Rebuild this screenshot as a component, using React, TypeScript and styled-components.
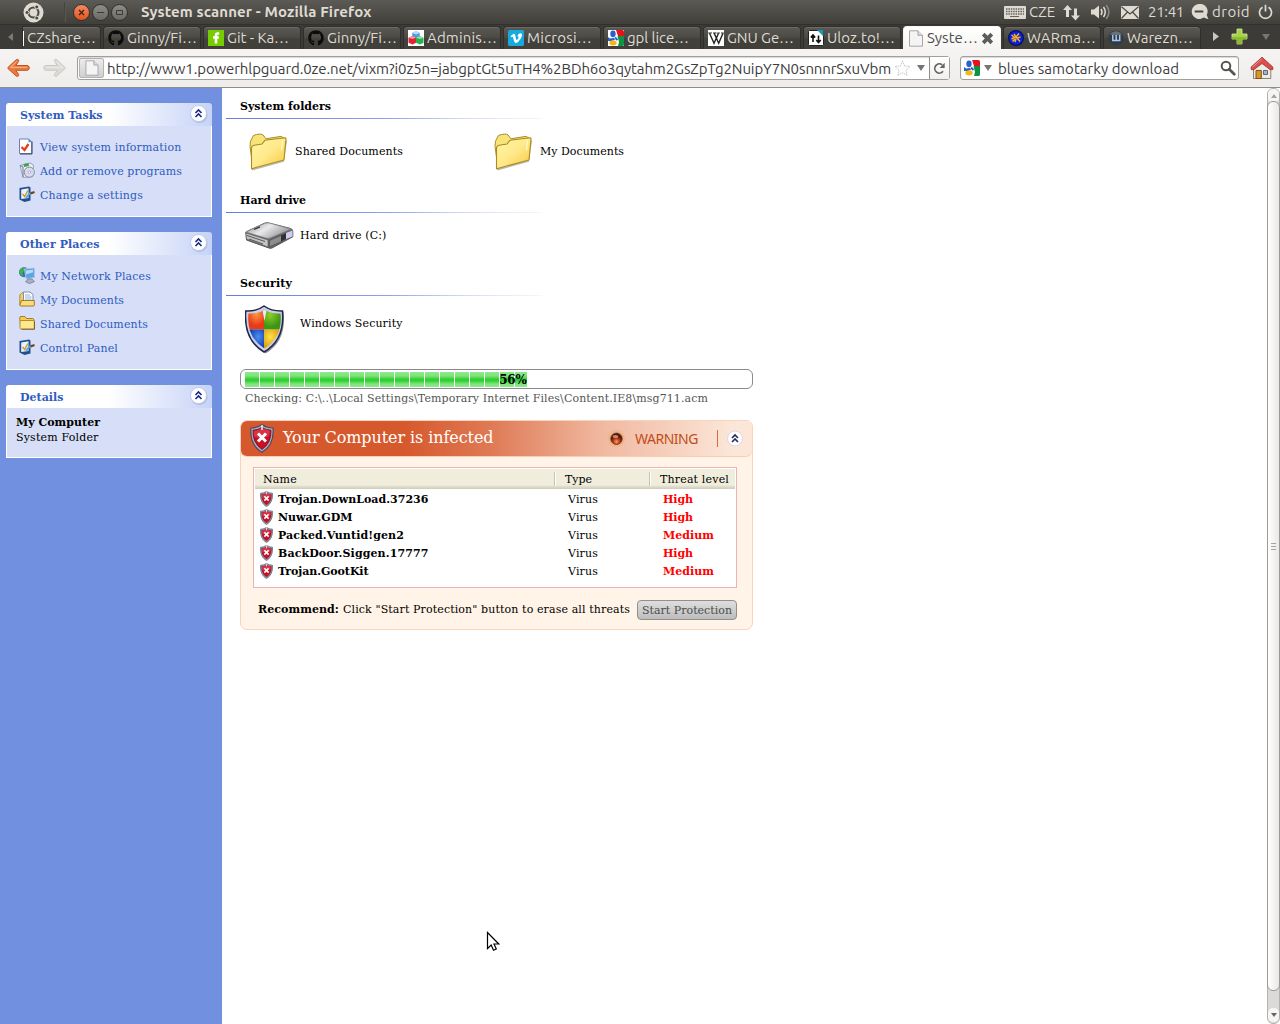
import React, { useLayoutEffect, useRef, useState } from "react";
import styled, { createGlobalStyle, css } from "styled-components";
import { FaGithub } from "react-icons/fa";

const Global = createGlobalStyle`
  *, *::before, *::after { box-sizing: border-box; }
  html, body { margin: 0; padding: 0; overflow: hidden; background: #fff; }
  svg { display: block; flex: none; }
`;

const serif = `"DejaVu Serif", serif`;
const chrome = `Ubuntu, "Noto Sans", "Open Sans", sans-serif`;

/* ---------- text that is tracked to fill a known measure ---------- */

const Measure = styled.span<{ $w: number }>`
  display: block;
  flex: none;
  width: ${(p) => p.$w}px;
  white-space: pre;
`;

const Run = styled.span`
  display: inline-block;
  white-space: pre;
`;

function Fit({ w, children }: { w: number; children: string }) {
  const ref = useRef<HTMLSpanElement>(null);
  const [tracking, setTracking] = useState(0);
  useLayoutEffect(() => {
    const el = ref.current;
    if (!el) return;
    const natural = el.getBoundingClientRect().width - tracking * children.length;
    setTracking((w - natural) / children.length);
  }, [w, children]);
  return (
    <Measure $w={w}>
      <Run ref={ref} style={{ letterSpacing: tracking }}>
        {children}
      </Run>
    </Measure>
  );
}

/* ---------- window chrome ---------- */

const Screen = styled.div`
  display: flex;
  flex-direction: column;
  width: 1280px;
  height: 1024px;
  overflow: hidden;
  font: 11px/15px ${serif};
  color: #000;
`;

const TitleBar = styled.header`
  display: flex;
  align-items: center;
  height: 24px;
  flex: none;
  padding: 0 7px 0 23px;
  background: linear-gradient(#5b5a55, #403f3a);
  color: #dfdbd2;
  font: 15px/24px ${chrome};
`;

const BarDivider = styled.i`
  width: 2px;
  height: 20px;
  margin: 0 7px 0 20px;
  background: linear-gradient(90deg, #3c3b37, #62615c);
`;

const WindowButton = styled.span<{ $close?: boolean }>`
  display: grid;
  place-items: center;
  width: 17px;
  height: 17px;
  margin-right: 2px;
  border: 1px solid #33322e;
  border-radius: 50%;
  background: ${(p) => (p.$close ? "linear-gradient(#f58a62, #e2541d)" : "linear-gradient(#8f8d86, #6b6a64)")};
`;

const WindowTitle = styled.div`
  margin-left: 11px;
  font-weight: 700;
`;

const Indicators = styled.div`
  display: flex;
  align-items: center;
  margin-left: auto;
`;

const Indicator = styled.div<{ $after: number }>`
  display: flex;
  align-items: center;
  gap: 3px;
  margin-right: ${(p) => p.$after}px;
`;

const TabStrip = styled.nav`
  display: flex;
  align-items: flex-end;
  height: 25px;
  flex: none;
  gap: 2px;
  background: linear-gradient(#32312d 0 1px, #3c3b37 1px);
`;

const StripArrow = styled.div`
  display: grid;
  place-items: center;
  width: 20px;
  height: 25px;
`;

const TabBox = styled.div<{ $active?: boolean; $cut?: boolean }>`
  display: flex;
  align-items: center;
  gap: 3px;
  width: ${(p) => (p.$cut ? 79 : 98)}px;
  height: 23px;
  padding-left: ${(p) => (p.$cut ? 0 : 4)}px;
  border: 1px solid #2f2e2a;
  border-bottom: 0;
  border-radius: ${(p) => (p.$cut ? "0 4px 0 0" : "4px 4px 0 0")};
  background: linear-gradient(#5a5954, #4a4944 50%, #42413c 50%, #403f3a);
  box-shadow: inset 0 1px #6c6b65;
  color: #dfdbd2;
  font: 15px/22px ${chrome};
  ${(p) =>
    p.$active &&
    css`
      background: linear-gradient(#fff, #f5f4f2);
      border-color: #f6f5f3;
      box-shadow: none;
      color: #4c4c4c;
    `}
`;

const CutMark = styled.i`
  width: 1px;
  height: 15px;
  background: #fff;
`;

const StripTools = styled.div`
  display: flex;
  align-items: center;
  height: 25px;
  padding-left: 10px;
`;

const Toolbar = styled.div`
  display: flex;
  align-items: center;
  flex: none;
  height: 39px;
  padding: 0 6px 0 7px;
  border-bottom: 1px solid #8e8d8a;
  background: linear-gradient(#f5f4f2, #eeedeb);
  color: #3c3c3c;
  font: 15px/22px ${chrome};
`;

const Field = styled.div<{ $w: number }>`
  display: flex;
  align-items: center;
  width: ${(p) => p.$w}px;
  height: 24px;
  border: 1px solid #a09f9b;
  border-radius: 3px;
  background: #fff;
  box-shadow: inset 0 1px 1px #d8d7d5;
  & > span { padding-top: 1px; }
`;

const Identity = styled.div`
  display: grid;
  place-items: center;
  width: 25px;
  height: 20px;
  margin: 0 3px 0 1px;
  border: 1px solid #b5b4b1;
  border-radius: 2px;
  background: linear-gradient(#ededed, #cfcfcf);
`;

const Reload = styled.div`
  display: grid;
  place-items: center;
  width: 20px;
  height: 22px;
  margin-left: 4px;
  border-left: 1px solid #8e8d8a;
  background: linear-gradient(#fff, #f1f0ee);
`;

const Push = styled.i<{ $w: number }>`
  flex: none;
  width: ${(p) => p.$w}px;
`;

/* ---------- page ---------- */

const Viewport = styled.div`
  display: flex;
  flex: 1;
  min-height: 0;
`;

const Sidebar = styled.aside`
  display: flex;
  flex-direction: column;
  gap: 15px;
  width: 222px;
  flex: none;
  padding: 15px 10px 0 6px;
  background: #7190e0;
`;

const Panel = styled.section`
  color: #2f5bc0;
`;

const PanelHead = styled.div`
  display: flex;
  align-items: flex-start;
  justify-content: space-between;
  height: 23px;
  padding: 1px 3px 0 14px;
  border-radius: 3px 3px 0 0;
  background: linear-gradient(90deg, #fff 50%, #c6d3f7);
  font-weight: 700;
  line-height: 23px;
`;

const PanelBody = styled.div<{ $details?: boolean }>`
  border: 1px solid #fff;
  border-top: 0;
  padding: ${(p) => (p.$details ? "7px 9px 12px" : "9px 12px")};
  background: #d6dff7;
  color: ${(p) => (p.$details ? "#000" : "inherit")};
`;

const PanelLink = styled.div`
  display: flex;
  align-items: center;
  gap: 5px;
  height: 24px;
  & > svg { margin-bottom: 2px; }
`;

const Bold = styled.div`
  font-weight: 700;
`;

const Main = styled.main`
  flex: 1;
  min-width: 0;
  padding: 10px 0 0 18px;
`;

const SectionTitle = styled.h2`
  height: 21px;
  margin: 0 0 0 -14px;
  padding: 1px 0 0 14px;
  width: 334px;
  font: 700 11px/15px ${serif};
  background: linear-gradient(90deg, #5f7fdd, #8ba2e8 50%, #d3dbf6 75%, #f6f4f6 97%, #fff) left bottom / 320px 1px no-repeat;
`;

const Places = styled.div<{ $h: number; $pad: number }>`
  display: flex;
  align-items: flex-start;
  height: ${(p) => p.$h}px;
  padding: ${(p) => p.$pad}px 0 0 5px;
`;

const Place = styled.div<{ $gap: number; $indent?: number; $label: number }>`
  display: flex;
  gap: ${(p) => p.$gap}px;
  width: 245px;
  padding-left: ${(p) => p.$indent ?? 0}px;
  & > span { margin-top: ${(p) => p.$label}px; }
`;

const Progress = styled.div`
  width: 513px;
  height: 20px;
  padding: 2px 4px;
  border: 1px solid #8b8b8b;
  border-radius: 6px;
  background: #fff;
`;

const ProgressFill = styled.div`
  display: flex;
  justify-content: flex-end;
  height: 15px;
  background:
    repeating-linear-gradient(90deg, transparent 0 14px, #fff 14px 15px),
    linear-gradient(#8fe88f 0, #7fe37f 25%, #2ccf2c 50%, #35d335 60%, #7fe37f 80%, #90e890);
  font: 700 12px/16px ${serif};
`;

const Checking = styled.div`
  padding: 2px 0 0 5px;
  color: #555;
`;

const Alert = styled.section`
  width: 513px;
  height: 210px;
  margin-top: 14px;
  border: 1px solid #fbd3bd;
  border-radius: 7px;
  background: #fff4e7;
`;

const AlertHead = styled.div`
  display: flex;
  align-items: center;
  height: 36px;
  padding-left: 9px;
  border-bottom: 1px solid #f8cdb5;
  border-radius: 6px;
  background: linear-gradient(90deg, #d6592d 0 32%, #df7a55 49%, #f0b79f 70%, #fbe6d8 96%);
`;

const AlertTitle = styled.div`
  margin: -2px 0 0 9px;
  color: #fff;
  font: 16px/34px ${serif};
`;

const Warning = styled.div`
  margin: 1px 0 0 9px;
  color: #c24d18;
  font: 14px/32px "Noto Sans", sans-serif;
`;

const HeadRule = styled.i`
  width: 1px;
  height: 17px;
  margin: 0 8px 0 19px;
  background: #dc6a3d;
`;

const Table = styled.div`
  width: 484px;
  height: 121px;
  margin: 10px 0 0 12px;
  padding: 1px;
  border: 1px solid #efb2b2;
  background: #fff;
`;

const HeadRow = styled.div`
  display: grid;
  grid-template-columns: 299px 95px 1fr;
  align-items: center;
  height: 20px;
  margin-bottom: 1px;
  background: linear-gradient(#f0eddd 0 16px, #dcd9c8 18px, #cfccb9);
`;

const HeadCell = styled.div<{ $ruled?: boolean }>`
  height: 14px;
  padding-left: 8px;
  line-height: 15px;
  ${(p) =>
    p.$ruled &&
    css`
      border-left: 1px solid #c5c2b2;
      box-shadow: inset 1px 0 #fff;
      padding-left: 10px;
    `}
`;

const Row = styled.div`
  display: grid;
  grid-template-columns: 18px 290px 95px 1fr;
  align-items: center;
  height: 18px;
  padding-left: 5px;
`;

const Threat = styled.div`
  font-weight: 700;
`;

const Level = styled(Threat)`
  color: #f00;
`;

const Recommend = styled.div`
  display: flex;
  align-items: flex-start;
  padding: 12px 0 0 17px;
  line-height: 19px;
`;

const StartButton = styled.button`
  width: 100px;
  height: 20px;
  margin-left: 7px;
  padding: 0 4px;
  border: 1px solid #8f8f8f;
  border-radius: 4px;
  background: linear-gradient(#dedede, #bdbdbd);
  color: #4c4c4c;
  font: 11px/17px ${serif};
  text-align: left;
`;

const Scrollbar = styled.div`
  display: flex;
  flex-direction: column;
  width: 13px;
  flex: none;
  padding-bottom: 1px;
  border: 1px solid #b4b2ae;
  border-radius: 6px;
  background: #dcdad8;
`;

const ScrollStep = styled.div`
  display: grid;
  place-items: center;
  height: 14px;
  background: #f6f5f4;
  border-radius: 5px;
`;

const ScrollThumb = styled.div`
  display: grid;
  place-items: center;
  height: 890px;
  margin: -2px -1px 0;
  border: 1px solid #9b9a96;
  border-radius: 6px;
  background: linear-gradient(90deg, #fff, #e9e8e6);
`;

const ScrollTrack = styled.div`
  flex: 1;
`;

const Pointer = styled.div`
  position: absolute;
  left: 486px;
  top: 931px;
`;

/* ---------- icons ---------- */

const Chevrons = () => (
  <svg width="20" height="20" viewBox="0 0 20 20">
    <circle cx="10.2" cy="10.8" r="8.400" fill="#8ea0d0" opacity=".4" />
    <circle cx="9.500" cy="9.500" r="8" fill="#fff" stroke="#b5c0e0" strokeWidth=".8" />
    <path d="M6.500 9l3-3 3 3M6.500 13l3-3 3 3" fill="none" stroke="#17298c" strokeWidth="1.600" />
  </svg>
);

const AlertChevrons = () => (
  <svg width="18" height="18" viewBox="0 0 18 18">
    <circle cx="9" cy="8.500" r="7.500" fill="#fff" stroke="#d5cde0" strokeWidth=".8" />
    <path d="M6 8l3-3 3 3M6 12l3-3 3 3" fill="none" stroke="#26285c" strokeWidth="1.600" />
  </svg>
);

const PageIcon = ({ w = 15, h = 17 }: { w?: number; h?: number }) => (
  <svg width={w} height={h} viewBox="0 0 15 17">
    <path d="M1 .8h8.500L14 5.300v10.900H1z" fill="#f4f4f4" stroke="#a5a5a5" />
    <path d="M9.500.8v4.500H14" fill="#ddd" stroke="#a5a5a5" />
  </svg>
);

const UbuntuLogo = () => (
  <svg width="21" height="21" viewBox="0 0 21 21">
    <circle cx="10.500" cy="10.500" r="10" fill="#dfdbd2" />
    <circle cx="10.500" cy="10.500" r="5" fill="none" stroke="#4b4a45" strokeWidth="2.100" />
    <g fill="#4b4a45" stroke="#dfdbd2" strokeWidth="1">
      <circle cx="4" cy="10.500" r="2" />
      <circle cx="13.800" cy="4.900" r="2" />
      <circle cx="13.800" cy="16.100" r="2" />
    </g>
  </svg>
);

const Triangle = ({ dir, fill, w = 8, h = 8 }: { dir: "l" | "r" | "d" | "u"; fill: string; w?: number; h?: number }) => {
  const d = { l: "M8 0v8L0 4z", r: "M0 0v8l8-4z", d: "M0 0h8L4 8z", u: "M0 8h8L4 0z" }[dir];
  return (
    <svg width={w} height={h} viewBox="0 0 8 8" preserveAspectRatio="none">
      <path d={d} fill={fill} />
    </svg>
  );
};

const GitHub = () => <FaGithub size={16} color="#0c0c0c" />;

const Forrst = () => (
  <svg width="16" height="16" viewBox="0 0 16 16">
    <path d="M0 0h16v16H0z" fill="#77cc00" />
    <path d="M11.200 3.500H10Q8 3.300 8 5v8.500M5 7.500H10.800" stroke="#fff" strokeWidth="2.500" fill="none" />
  </svg>
);

const Cubes = () => (
  <svg width="16" height="16" viewBox="0 0 16 16">
    <path d="M0 0h16v16H0z" fill="#fff" />
    <path d="M8 1l3.800 2v4L8 9 4.200 7V3z" fill="#4a9de8" />
    <path d="M8 1l3.800 2L8 4.500 4.200 3z" fill="#b7dcf8" />
    <path d="M4.500 6L8 7.700v5L4.500 14.500 .5 12.800V7.700z" fill="#df2434" />
    <path d="M4.500 6L8 7.700 4.500 9 .5 7.700z" fill="#f49aa0" />
    <path d="M12 6l3.500 1.700v5L12 14.500l-4-1.700V7.700z" fill="#28b24b" />
    <path d="M12 6l3.500 1.700L12 9 8 7.700z" fill="#9be0a8" />
  </svg>
);

const Vimeo = () => (
  <svg width="16" height="16" viewBox="0 0 16 16">
    <rect width="16" height="16" rx="1.500" fill="#17aadc" />
    <path d="M2.500 6.200l2.700-2.300c1.200-.6 1.900.1 2.200 1.800.5 3 .9 4.400 1.300 4.400.5 0 1.900-2.300 1.900-3.200 0-.7-.5-.9-1.200-.6.6-2.200 1.900-3.100 3.200-3 1.100.1 1.500 1 1.300 2.200-.5 2.900-4 7.500-5.900 7.500-1.500 0-1.900-1.600-2.700-4.700-.5-1.900-.8-2-1.900-1z" fill="#fff" />
  </svg>
);

const Google = () => (
  <svg width="16" height="16" viewBox="0 0 16 16">
    <path d="M0 0h16v16H0z" fill="#fff" />
    <path d="M8 0h6.500Q16 0 16 1.500V6h-6z" fill="#e8121c" />
    <path d="M9.500 6H16v8.500q0 1.500-1.500 1.500H10l1-4z" fill="#0d9440" />
    <path d="M0 7l2 1.500 4-.5 1 2-4 1H0z" fill="#2b60c8" />
    <ellipse cx="5" cy="3.800" rx="2.700" ry="3.400" fill="#2b60c8" />
    <path d="M7 7.500L9.500 10" stroke="#2b60c8" strokeWidth="2" />
    <ellipse cx="5" cy="13" rx="3.700" ry="2.400" fill="#f5b912" />
  </svg>
);

const Wikipedia = () => (
  <svg width="16" height="16" viewBox="0 0 16 16">
    <path d="M0 0h16v16H0z" fill="#fff" />
    <path d="M1.500 3.300L6 13.300 10.500 3.300M6.200 3.300l4.500 10L15 3.300" stroke="#222" strokeWidth="1.400" fill="none" />
    <path d="M.3 3h3.600M5 3h3.600M9.300 3h2.500M13 3h2.700" stroke="#222" />
  </svg>
);

const Uloz = () => (
  <svg width="16" height="16" viewBox="0 0 16 16">
    <path d="M.5 1.500q0-1 1-1h9l5 5v9q0 1-1 1h-13q-1 0-1-1z" fill="#fff" stroke="#222" />
    <path d="M9 0h6v6z" fill="#1698b8" />
    <path d="M5 12V5.500M2.800 7.500L5 5l2.200 2.500M10.500 5.500V12M8.300 10l2.200 2.500 2.200-2.500" stroke="#111" strokeWidth="1.600" fill="none" />
  </svg>
);

const WarMania = () => (
  <svg width="16" height="16" viewBox="0 0 16 16">
    <circle cx="8" cy="8" r="7.400" fill="#0c22d8" stroke="#061062" strokeWidth="1.200" />
    <path d="M3.500 5l3 2.500-3 1.500M6 4l2 3 3-3.500M12.500 7l-3.500 1 3 3.500M8 8.500l-1 3.500M4.500 11.500L7 9" stroke="#f5ac26" strokeWidth="1.500" fill="none" />
  </svg>
);

const Warezn = () => (
  <svg width="16" height="16" viewBox="0 0 16 16">
    <circle cx="8" cy="8" r="7.500" fill="#303b48" />
    <path d="M2 4.500a7.300 7.300 0 0 1 12 0q-6 1.500-12 0z" fill="#68727e" />
    <path d="M4.800 5v5.500h6.900V5M8.200 5v5" stroke="#a9c9ea" strokeWidth="1.500" fill="none" />
  </svg>
);

const CloseTab = () => (
  <svg width="13" height="13" viewBox="0 0 13 13">
    <path d="M2.200 2.200l8.600 8.600M10.800 2.200l-8.600 8.600" stroke="#5d5d5b" strokeWidth="3.800" />
  </svg>
);

const Plus = () => (
  <svg width="17" height="17" viewBox="0 0 17 17">
    <path d="M6 1h5v5h5v5h-5v5H6v-5H1V6h5z" fill="#a6d243" stroke="#d5ecaa" strokeWidth=".8" />
    <path d="M6 9h10v2h-5v5H6v-5H1V9z" fill="#8abb28" />
  </svg>
);

const Arrow = ({ back }: { back?: boolean }) => (
  <svg width="24" height="20" viewBox="0 0 24 20" transform={back ? undefined : "scale(-1 1)"}>
    <path
      d="M9.500 1.500c1.500-.6 2.800.8 2 2L8.700 7.500H20c3 0 3 4.800 0 4.800H8.700l2.800 4c.8 1.300-.6 2.600-2 2L1.200 10.800q-.8-.8 0-1.600z"
      fill={back ? "#ea7a3d" : "#dcdad7"}
      stroke={back ? "#c4521b" : "#cbc9c5"}
    />
    <path d="M9.500 3.500L3.500 9.300H20" fill="none" stroke={back ? "#f9b88e" : "#ebeae8"} />
  </svg>
);

const Star = () => (
  <svg width="17" height="17" viewBox="0 0 17 17">
    <path d="M8.500 1l2.200 5 5.300.5-4 3.700 1.200 5.300-4.700-2.800-4.700 2.800L5 10.200 1 6.500 6.300 6z" fill="#fdfdfd" stroke="#c8c8c8" strokeDasharray="1.500 .7" />
  </svg>
);

const ReloadIcon = () => (
  <svg width="13" height="13" viewBox="0 0 13 13">
    <path d="M10 9.300A4.600 4.600 0 1 1 9.200 2.800" fill="none" stroke="#666560" strokeWidth="1.700" />
    <path d="M6.500 6h5.200V.8z" fill="#666560" />
  </svg>
);

const Magnifier = () => (
  <svg width="16" height="16" viewBox="0 0 16 16">
    <circle cx="6" cy="6" r="4.300" fill="#fff" stroke="#55544f" strokeWidth="2" />
    <path d="M9.300 9.300l5 5" stroke="#55544f" strokeWidth="2.700" strokeLinecap="round" />
  </svg>
);

const Home = () => (
  <svg width="24" height="24" viewBox="0 0 24 24">
    <path d="M3.500 10.500L12 3l8.800 7.500V22.500H3.500z" fill="#ecebe4" stroke="#888575" />
    <path d="M12 1.200l10.800 9.800v2.600h-2.700L12 7.500l-8.100 6.100H1.200V11z" fill="#d84f4f" stroke="#a42626" strokeWidth=".8" />
    <path d="M12 2.500L2.500 11.200" stroke="#ef9090" />
    <path d="M6 14.500h5.300v8H6z" fill="#d9952f" stroke="#845410" />
    <path d="M13.500 14.500h4v4h-4z" fill="#9bb7d8" stroke="#666" />
  </svg>
);

const Keyboard = () => (
  <svg width="22" height="13" viewBox="0 0 22 13">
    <rect width="22" height="13" rx="1" fill="#dfdbd2" />
    <path d="M2 3h18M2 5.500h18M2 8h18" stroke="#65645f" strokeWidth="1.300" strokeDasharray="1.500 .9" />
    <path d="M6 10.500h9" stroke="#65645f" />
  </svg>
);

const NetArrows = () => (
  <svg width="17" height="17" viewBox="0 0 17 17">
    <path d="M4.500 1L9 6H6v7H3V6H0zM12.500 16.500L8 11.500h3V4.500h3v7h3z" fill="#dfdbd2" />
  </svg>
);

const Sound = () => (
  <svg width="20" height="16" viewBox="0 0 20 16">
    <path d="M0 5.500h3L8 1.500v13l-5-4H0z" fill="#dfdbd2" />
    <path d="M10 5q2 3 0 6M12.500 3q3.500 5 0 10" fill="none" stroke="#dfdbd2" strokeWidth="1.500" />
    <path d="M15.300 1q5.200 7 0 14" fill="none" stroke="#8d8a83" strokeWidth="1.500" />
  </svg>
);

const Mail = () => (
  <svg width="18" height="13" viewBox="0 0 18 13">
    <path d="M0 0h18v13H0z" fill="#dfdbd2" />
    <path d="M.5.8L9 8 17.500.8M.5 12.500L6.500 6M17.500 12.500L11.500 6" fill="none" stroke="#4b4a45" strokeWidth="1.200" />
  </svg>
);

const MeBubble = () => (
  <svg width="18" height="16" viewBox="0 0 18 16">
    <path d="M8 0a7.500 7.500 0 1 0 4.600 13.600l4.900 1.600-1.800-4.200A7.500 7.500 0 0 0 8 0z" fill="#dfdbd2" />
    <path d="M3.700 7.500h8.600" stroke="#45443f" strokeWidth="2" />
  </svg>
);

const Power = () => (
  <svg width="15" height="16" viewBox="0 0 15 16">
    <path d="M4.500 3.200a6 6 0 1 0 6 0M7.500.8v6.700" fill="none" stroke="#dfdbd2" strokeWidth="1.700" />
  </svg>
);

const ReportIcon = () => (
  <svg width="16" height="17" viewBox="0 0 16 17">
    <path d="M.5 1h9.200l3 3v11.500H.5z" fill="#fff" stroke="#7380a8" />
    <path d="M13 3.500v12.500H1" stroke="#3d4868" fill="none" />
    <path d="M9.500 .8l3.500 3.500H9.500z" fill="#4c8fd8" />
    <path d="M2.500 9l3 3L9.500 6" fill="none" stroke="#ea3c1c" strokeWidth="2.300" />
  </svg>
);

const ProgramsIcon = () => (
  <svg width="16" height="17" viewBox="0 0 16 17">
    <path d="M1 3.500l10-2.500 3.500 2-1 11.500-9.500 1z" fill="#e9eef4" stroke="#8792a5" strokeWidth=".8" />
    <path d="M1 3.500l3 1.500v10" fill="none" stroke="#6b7890" />
    <path d="M4.500 2l5-1 .5 3-5 1z" fill="#45a04d" />
    <circle cx="10.300" cy="10.200" r="5.100" fill="#dcd9f0" stroke="#8388a8" />
    <path d="M10.300 10.200l4-3a5 5 0 0 1 .8 3z" fill="#b5e0d2" />
    <circle cx="10.300" cy="10.200" r="1.300" fill="#fff" stroke="#8388a8" strokeWidth=".6" />
  </svg>
);

const SettingsIcon = () => (
  <svg width="16" height="17" viewBox="0 0 16 17">
    <path d="M.5 2l9.500-1.500 1.500 1v13L5.500 16 .5 13.500z" fill="#234f8e" />
    <path d="M2.200 3.500l7.300-1.200v9.700l-7.300 1z" fill="#e8f3ff" />
    <path d="M3.500 8l2.200 2.500L8.800 4.500" fill="none" stroke="#d29b22" strokeWidth="1.400" />
    <path d="M7 12l3-4 3-1.500" fill="none" stroke="#58a7e0" strokeWidth="2" />
    <path d="M11.500 7.500l4-1.500" stroke="#6b4028" strokeWidth="2.200" />
  </svg>
);

const NetworkIcon = () => (
  <svg width="16" height="17" viewBox="0 0 16 17">
    <circle cx="5" cy="5.300" r="5" fill="#2b6cc8" />
    <path d="M.2 4q1.500-3.500 5.500-3.500l-.5 3L3.500 6l1.200 3.500Q0 8 .2 4z" fill="#3fb441" />
    <path d="M5.500 2l9.800-1 .2 9.500-8.500 1.500z" fill="#58a5ea" stroke="#b8c2d8" />
    <path d="M7 3.500l7-.7v2.400L7 7.500z" fill="#b5dcfb" />
    <path d="M9 12h4l2.500 2.500-5 2.200-4-2z" fill="#a9b1c4" stroke="#5d6886" strokeWidth=".6" />
  </svg>
);

const DocsIcon = () => (
  <svg width="16" height="17" viewBox="0 0 16 17">
    <path d="M.8 4l2.500-2.500h2V14H.8z" fill="#f3cf62" stroke="#a87a18" strokeWidth=".8" />
    <path d="M4.500 1h6.500L14 3.500V12H4.500z" fill="#fff" stroke="#7f8fb5" />
    <path d="M6 4h5M6 6h6.500M6 8h6.500" stroke="#8bb0dd" />
    <path d="M.8 14L2.500 9.500h12.800V14q0 1-.8 1H1.500z" fill="#f8dd7e" stroke="#a06c12" strokeWidth=".9" />
  </svg>
);

const SmallFolder = () => (
  <svg width="16" height="17" viewBox="0 0 16 17">
    <path d="M.7 3q0-1.500 1.200-1.500h4L7.500 3.500h6q1.300 0 1.300 1.300v8.500H2z" fill="#f4cc57" stroke="#9e7416" strokeWidth=".9" />
    <path d="M2 5.500h13.300v7.700q0 .8-.8.8H2.300Q1 14 1 12.800V6.300z" fill="#fbe88f" stroke="#a87a18" strokeWidth=".8" />
    <path d="M2.500 14.300h13V6.500" fill="none" stroke="#5d4818" strokeWidth=".7" />
  </svg>
);

const Folder = () => (
  <svg width="39" height="38" viewBox="0 0 39 39.500" preserveAspectRatio="none">
    <defs>
      <linearGradient id="fold" x1="0" y1="0" x2="1" y2="1">
        <stop offset="0" stopColor="#fff7a8" />
        <stop offset=".5" stopColor="#ffe98a" />
        <stop offset="1" stopColor="#f5c83c" />
      </linearGradient>
    </defs>
    <path d="M3 38l31-9 3-21" fill="none" stroke="#8b8878" strokeWidth="2" opacity=".6" />
    <path d="M1 14L1.500 8.500l3-6q7-2.500 9.500-.5L17 6 32 3.500l4 2.500v8L4 36z" fill="#f6e37a" stroke="#a88a22" />
    <path d="M2.500 37V15.500q.3-2.500 2.500-2.800l8-1.200 3-4L36 5q1.200 0 1 1.500L35 28 3.500 36.800z" fill="url(#fold)" stroke="#a98a1e" strokeWidth="1.100" />
    <path d="M33.500 7.500L32.500 18" stroke="#fff8c8" strokeWidth="1.400" />
  </svg>
);

const Drive = () => (
  <svg width="49" height="28" viewBox="0 0 49 28">
    <defs>
      <linearGradient id="drv" x1="0" y1="0" x2="1" y2=".5">
        <stop offset="0" stopColor="#8c8c8e" />
        <stop offset=".5" stopColor="#e9e9ec" />
        <stop offset="1" stopColor="#98989c" />
      </linearGradient>
    </defs>
    <path d="M.8 10L19.500 1.200q2-.8 4-.3L45 6.300q2.800.8 2.800 3v5.500L27 26q-2 .7-4-.3L1.500 18z" fill="#69696c" stroke="#59595c" />
    <path d="M1 10L20 1.300q2-.7 4-.2L46 7 25 16q-2 .5-4 0z" fill="url(#drv)" stroke="#848488" strokeWidth=".6" />
    <path d="M1 11l22 7v7L1.500 17z" fill="#c5c5c8" stroke="#555" strokeWidth=".6" />
    <path d="M2 13.500l18 6M4 17l14 5" stroke="#555" />
    <path d="M24.500 18.500L37 13v6.300l-12.500 5.500z" fill="#8d8d90" stroke="#444" strokeWidth=".6" />
    <path d="M36 13.500l5-2.500v6l-5 2.500z" fill="#303033" />
    <path d="M41 11l6.500-2.500v6L41 17z" fill="#cfcbf2" />
    <path d="M9 7.500l6-2.700" stroke="#333" strokeWidth="1.300" />
  </svg>
);

const SecurityShield = () => (
  <svg width="40" height="49" viewBox="0 0 40 49">
    <defs>
      <clipPath id="shield">
        <path d="M19.500 5Q27 9 35.500 8.500 38 32 19.500 43.500 1 32 3.500 8.500 13 9 19.500 5z" />
      </clipPath>
      <radialGradient id="red" cx=".6" cy=".35"><stop stopColor="#ff9a45" /><stop offset="1" stopColor="#e83a16" /></radialGradient>
      <radialGradient id="green" cx=".3" cy=".4"><stop stopColor="#8fcd2a" /><stop offset="1" stopColor="#3f9614" /></radialGradient>
      <radialGradient id="blue" cx=".7" cy=".3"><stop stopColor="#4b8ef0" /><stop offset="1" stopColor="#0b3cae" /></radialGradient>
      <radialGradient id="gold" cx=".3" cy=".3"><stop stopColor="#ffe04a" /><stop offset="1" stopColor="#d99c0a" /></radialGradient>
    </defs>
    <path d="M20.500 1.500Q28 7 38.500 6.500 42 36 20.500 48.500 -.5 36 2 6.500 13 7 20.500 1.500z" fill="#55555e" opacity=".65" />
    <path d="M19 1Q27 6.500 37.500 6 40 35 19 47 -1.500 35 .7 6 12 6.500 19 1z" fill="#c9cfe6" stroke="#20264a" strokeWidth="1.500" />
    <g clipPath="url(#shield)">
      <path d="M0 0h19v24.500H0z" fill="url(#red)" />
      <path d="M19 0h21v24.500H19z" fill="url(#green)" />
      <path d="M0 24.500h19V49H0z" fill="url(#blue)" />
      <path d="M19 24.500h21V49H19z" fill="url(#gold)" />
      <path d="M17 3h5l-2.500 13z" fill="#e8ecf8" />
    </g>
  </svg>
);

const ThreatShield = ({ w, h }: { w: number; h: number }) => (
  <svg width={w} height={h} viewBox="0 0 24 29" preserveAspectRatio="none">
    <path d="M12 .8Q17 4 23 4q1.500 17-11 24.300Q-.5 21 1 4 7 4 12 .8z" fill="#a9aec2" stroke="#454b66" strokeWidth="1.200" />
    <path d="M12 3.500q4 2.500 9 2.700Q21.500 19 12 25.500 2.500 19 3 6.200 8 6 12 3.500z" fill="#cc0f22" stroke="#6c0c1c" strokeWidth=".8" />
    <path d="M3.500 7Q8 6.500 12 4l8 2.700q0 4-2 6-7 2-14 0z" fill="#e65a66" opacity=".5" />
    <path d="M8 9.500l8 8M16 9.500l-8 8" stroke="#fff" strokeWidth="3" />
    <path d="M12 1v5" stroke="#eef" strokeWidth="1.500" />
  </svg>
);

const Orb = () => (
  <svg width="19" height="19" viewBox="0 0 19 19">
    <defs>
      <radialGradient id="orb" cx=".5" cy=".75"><stop stopColor="#ff9b62" /><stop offset=".5" stopColor="#c64018" /><stop offset="1" stopColor="#4d1d12" /></radialGradient>
      <radialGradient id="glow"><stop offset=".5" stopColor="#f3a35d" stopOpacity=".8" /><stop offset="1" stopColor="#f3a35d" stopOpacity="0" /></radialGradient>
    </defs>
    <circle cx="9.500" cy="9.500" r="9.500" fill="url(#glow)" />
    <circle cx="9.500" cy="9.800" r="5.700" fill="url(#orb)" stroke="#683326" strokeWidth=".8" />
    <ellipse cx="8.500" cy="7.500" rx="2.800" ry="1.600" fill="#e8a58e" opacity=".8" />
  </svg>
);

/* ---------- data ---------- */

type TabInfo = { icon?: React.ReactNode; label: string; w: number; active?: boolean; cut?: boolean };

const tabs: TabInfo[] = [
  { label: "CZshare…", w: 69, cut: true },
  { icon: <GitHub />, label: "Ginny/Fi…", w: 70 },
  { icon: <Forrst />, label: "Git - Ka…", w: 62 },
  { icon: <GitHub />, label: "Ginny/Fi…", w: 70 },
  { icon: <Cubes />, label: "Adminis…", w: 70 },
  { icon: <Vimeo />, label: "Microsi…", w: 65 },
  { icon: <Google />, label: "gpl lice…", w: 62 },
  { icon: <Wikipedia />, label: "GNU Ge…", w: 67 },
  { icon: <Uloz />, label: "Uloz.to!…", w: 68 },
  { icon: <PageIcon w={16} />, label: "Syste…", w: 51, active: true },
  { icon: <WarMania />, label: "WARma…", w: 69 },
  { icon: <Warezn />, label: "Warezn…", w: 66 },
];

const panels = [
  {
    title: "System Tasks",
    w: 82.5,
    links: [
      { icon: <ReportIcon />, label: "View system information", w: 141.5 },
      { icon: <ProgramsIcon />, label: "Add or remove programs", w: 142 },
      { icon: <SettingsIcon />, label: "Change a settings", w: 103 },
    ],
  },
  {
    title: "Other Places",
    w: 79.5,
    links: [
      { icon: <NetworkIcon />, label: "My Network Places", w: 111 },
      { icon: <DocsIcon />, label: "My Documents", w: 84 },
      { icon: <SmallFolder />, label: "Shared Documents", w: 108 },
      { icon: <SettingsIcon />, label: "Control Panel", w: 78 },
    ],
  },
];

const threats = [
  { name: "Trojan.DownLoad.37236", w: 150.5, level: "High" },
  { name: "Nuwar.GDM", w: 74.5, level: "High" },
  { name: "Packed.Vuntid!gen2", w: 126, level: "Medium" },
  { name: "BackDoor.Siggen.17777", w: 150.5, level: "High" },
  { name: "Trojan.GootKit", w: 90.5, level: "Medium" },
];

const progress = 56;

/* ---------- app ---------- */

export default function App() {
  return (
    <>
      <Global />
      <Screen>
        <TitleBar>
          <UbuntuLogo />
          <BarDivider />
          <WindowButton $close>
            <svg width="7" height="7" viewBox="0 0 7 7"><path d="M1 1l5 5M6 1L1 6" stroke="#3c2018" strokeWidth="1.200" /></svg>
          </WindowButton>
          <WindowButton>
            <svg width="7" height="7" viewBox="0 0 7 7"><path d="M0 3.500h7" stroke="#3c3b37" /></svg>
          </WindowButton>
          <WindowButton>
            <svg width="8" height="7" viewBox="0 0 8 7"><path d="M.5 1.500h6v4h-6z" fill="none" stroke="#3c3b37" /></svg>
          </WindowButton>
          <WindowTitle><Fit w={230.5}>System scanner - Mozilla Firefox</Fit></WindowTitle>
          <Indicators>
            <Indicator $after={8}><Keyboard /><Fit w={26}>CZE</Fit></Indicator>
            <Indicator $after={11}><NetArrows /></Indicator>
            <Indicator $after={10}><Sound /></Indicator>
            <Indicator $after={9}><Mail /></Indicator>
            <Indicator $after={7}><Fit w={36}>21:41</Fit></Indicator>
            <Indicator $after={8}><MeBubble /><Fit w={38}>droid</Fit></Indicator>
            <Power />
          </Indicators>
        </TitleBar>

        <TabStrip>
          <StripArrow><Triangle dir="l" fill="#7b7a75" w={5} /></StripArrow>
          {tabs.map((t, i) => (
            <TabBox key={i} $active={t.active} $cut={t.cut}>
              {t.cut ? <CutMark /> : t.icon}
              <Fit w={t.w}>{t.label}</Fit>
              {t.active && <CloseTab />}
            </TabBox>
          ))}
          <StripTools>
            <Triangle dir="r" fill="#c9c6bf" w={6} h={9} />
            <Push $w={12} />
            <Plus />
            <Push $w={14} />
            <Triangle dir="d" fill="#76756f" w={8} h={6} />
          </StripTools>
        </TabStrip>

        <Toolbar>
          <Arrow back />
          <Push $w={11} />
          <Arrow />
          <Push $w={11} />
          <Field $w={873}>
            <Identity><PageIcon w={14} h={16} /></Identity>
            <Fit w={784}>http://www1.powerhlpguard.0ze.net/vixm?i0z5n=jabgptGt5uTH4%2BDh6o3qytahm2GsZpTg2NuipY7N0snnnrSxuVbm</Fit>
            <Push $w={3} />
            <Star />
            <Push $w={6} />
            <Triangle dir="d" fill="#75746f" w={8} h={6} />
            <Reload><ReloadIcon /></Reload>
          </Field>
          <Push $w={10} />
          <Field $w={279}>
            <Push $w={3} />
            <Google />
            <Push $w={4} />
            <Triangle dir="d" fill="#75746f" w={8} h={6} />
            <Push $w={6} />
            <Fit w={181}>blues samotarky download</Fit>
            <Push $w={41} />
            <Magnifier />
          </Field>
          <Push $w={11} />
          <Home />
        </Toolbar>

        <Viewport>
          <Sidebar>
            {panels.map((p) => (
              <Panel key={p.title}>
                <PanelHead><Fit w={p.w}>{p.title}</Fit><Chevrons /></PanelHead>
                <PanelBody>
                  {p.links.map((l) => (
                    <PanelLink key={l.label}>{l.icon}<Fit w={l.w}>{l.label}</Fit></PanelLink>
                  ))}
                </PanelBody>
              </Panel>
            ))}
            <Panel>
              <PanelHead><Fit w={43.5}>Details</Fit><Chevrons /></PanelHead>
              <PanelBody $details>
                <Bold><Fit w={84}>My Computer</Fit></Bold>
                <Fit w={82.5}>System Folder</Fit>
              </PanelBody>
            </Panel>
          </Sidebar>

          <Main>
            <SectionTitle><Fit w={91}>System folders</Fit></SectionTitle>
            <Places $h={73} $pad={14}>
              <Place $gap={7} $indent={4} $label={11}><Folder /><Fit w={108}>Shared Documents</Fit></Place>
              <Place $gap={7} $indent={4} $label={11}><Folder /><Fit w={84}>My Documents</Fit></Place>
            </Places>
            <SectionTitle><Fit w={66}>Hard drive</Fit></SectionTitle>
            <Places $h={62} $pad={9}>
              <Place $gap={6} $label={6}><Drive /><Fit w={86.5}>Hard drive (C:)</Fit></Place>
            </Places>
            <SectionTitle><Fit w={52}>Security</Fit></SectionTitle>
            <Places $h={73} $pad={9}>
              <Place $gap={15} $label={11}><SecurityShield /><Fit w={102.5}>Windows Security</Fit></Place>
            </Places>
            <Progress>
              <ProgressFill style={{ width: `${progress}%` }}><Fit w={27.5}>{`${progress}%`}</Fit></ProgressFill>
            </Progress>
            <Checking>
              <Fit w={463}>{"Checking: C:\\..\\Local Settings\\Temporary Internet Files\\Content.IE8\\msg711.acm"}</Fit>
            </Checking>

            <Alert>
              <AlertHead>
                <ThreatShield w={24} h={29} />
                <AlertTitle><Fit w={210.5}>Your Computer is infected</Fit></AlertTitle>
                <Push $w={113.5} />
                <Orb />
                <Warning><Fit w={63}>WARNING</Fit></Warning>
                <HeadRule />
                <AlertChevrons />
              </AlertHead>
              <Table>
                <HeadRow>
                  <HeadCell><Fit w={34}>Name</Fit></HeadCell>
                  <HeadCell $ruled><Fit w={27}>Type</Fit></HeadCell>
                  <HeadCell $ruled><Fit w={69}>Threat level</Fit></HeadCell>
                </HeadRow>
                {threats.map((t) => (
                  <Row key={t.name}>
                    <ThreatShield w={13} h={16} />
                    <Threat><Fit w={t.w}>{t.name}</Fit></Threat>
                    <Fit w={30}>Virus</Fit>
                    <Level><Fit w={t.level === "High" ? 30 : 51}>{t.level}</Fit></Level>
                  </Row>
                ))}
              </Table>
              <Recommend>
                <Bold><Fit w={81}>Recommend:</Fit></Bold>
                <Push $w={4} />
                <Fit w={287}>Click "Start Protection" button to erase all threats</Fit>
                <StartButton><Fit w={90}>Start Protection</Fit></StartButton>
              </Recommend>
            </Alert>
          </Main>

          <Scrollbar>
            <ScrollStep><Triangle dir="u" fill="#a5a4a0" w={6} h={4} /></ScrollStep>
            <ScrollThumb>
              <svg width="5" height="7" viewBox="0 0 5 7"><path d="M0 .5h5M0 3.500h5M0 6.500h5" stroke="#a5a4a0" /></svg>
            </ScrollThumb>
            <ScrollTrack />
            <ScrollStep><Triangle dir="d" fill="#666560" w={6} h={4} /></ScrollStep>
          </Scrollbar>
        </Viewport>
      </Screen>
      <Pointer>
        <svg width="14" height="22" viewBox="0 0 14 22">
          <path d="M1.500 1.500v16l3.700-3.500 2.300 5.200 2.800-1.200-2.300-5h4.800z" fill="#fff" stroke="#000" strokeWidth="1.200" />
        </svg>
      </Pointer>
    </>
  );
}
